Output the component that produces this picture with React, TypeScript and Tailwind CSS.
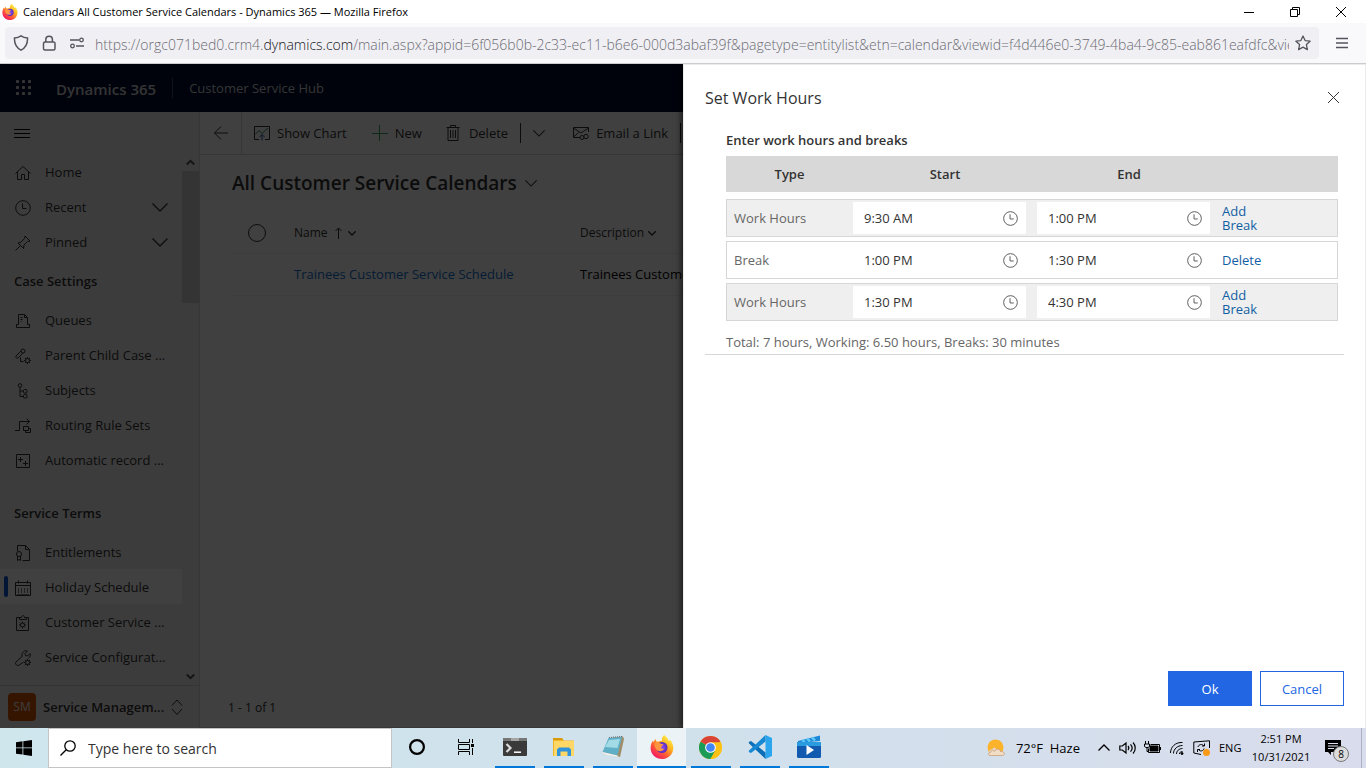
import React from "react";

type IconProps = { className?: string; children: React.ReactNode; box?: string; w?: number };

function Icon({ className = "size-4", children, box = "0 0 16 16", w = 1 }: IconProps) {
  return (
    <svg className={`shrink-0 ${className}`} viewBox={box} fill="none" stroke="currentColor" strokeWidth={w} aria-hidden="true">
      {children}
    </svg>
  );
}

const gear = (cx: number, cy: number) => (
  <>
    <circle cx={cx} cy={cy} r="2" />
    <path
      d={`M${cx} ${cy - 3.5}v1.5M${cx} ${cy + 2}v1.5M${cx - 3.5} ${cy}h1.5M${cx + 2} ${cy}h1.5M${cx - 2.5} ${cy - 2.5}l1 1M${cx + 1.5} ${cy + 1.5}l1 1M${cx + 2.5} ${cy - 2.5}l-1 1M${cx - 1.5} ${cy + 1.5}l-1 1`}
    />
  </>
);

const HomeIcon = () => <Icon><path d="M.5 8.500 8 1.500l7.500 7M2.500 7v7.500h4V9.500h3v5h4V7" /></Icon>;
const ClockIcon = ({ className = "size-4" }: { className?: string }) => (
  <Icon className={className}><circle cx="8" cy="8" r="7.300" /><path d="M7.500 3.500v5h4" /></Icon>
);
const PinIcon = () => <Icon><path d="M.5 15.500 5.500 10.500M3 8l5.500 5.500.5-3.500 3.500-3.500 2.500-.5L10 1l-.5 2.500L6 7.200 3 8Z" /></Icon>;
const QueueIcon = () => <Icon><path d="M3.500 11.500v-10h6l3 3v7M9.500 1.500v3h3M5.500 4.500h2M5.500 6.500h2M5.500 8.500h1M3.500 11.500h-2v3h13v-3h-2" /></Icon>;
const CaseIcon = () => <Icon><path d="m1 8 5-5M3 10l5-5M1 8c-1 1 1 3 2 2M5.500 9.500v4h3" /><circle cx="8" cy="3" r="2" />{gear(12.5, 12.5)}</Icon>;
const SubjectIcon = () => (
  <Icon><circle cx="5" cy="2.500" r="1.800" /><path d="M5 4.500v9h3.500M5 8h3.500" /><rect x="8.500" y="6.500" width="3.500" height="3.500" rx="1" /><rect x="8.500" y="11.500" width="3.500" height="3.500" rx="1" /></Icon>
);
const RouteIcon = () => <Icon><path d="M0 12.500h4.500v-9h10M11.500.5l3 3-3 3" /><path d="M8.500 8.500h5v4h-5zM10.500 12.500v2h5v-4h-2" /></Icon>;
const RecordIcon = () => <Icon><path d="M1.500 1.500h13v13h-13zM3 6.500h5M5.500 4v5M8 10.500h5M10.500 8v5" /></Icon>;
const EntitleIcon = () => <Icon><path d="M2.500 6V.5h8l4 4v11H7.500M10.500.5v4h4M2.500 11v4.500l1.500-1 1.500 1V11" /><circle cx="4" cy="9" r="2.500" /></Icon>;
const CalendarIcon = () => (
  <Icon><path d="M.5 2.500h15v13H.5zM.5 5.500h15M3.500.5v3M12.500.5v3" /><path strokeOpacity=".6" d="M3.500 8v5M6.500 8v5M9.500 8v5M12.500 8v5M2 14.500h12" /></Icon>
);
const ClipIcon = () => <Icon><path d="M5.500 2.500h-4v13h12v-13h-4M4.500 4.500v-2h2c0-2.500 3-2.500 3 0h2v2z" />{gear(7.5, 10)}</Icon>;
const WrenchIcon = () => (
  <Icon><path d="M8.500 12 4 15.200C2 16.300-.5 14 1 12l6-5.500C6.500 2 9.500 0 12.500 1L10 3.500l.5 2 2 .5L15 3.500c.8 2-.2 4-1.500 4.500" />{gear(12.5, 12.5)}</Icon>
);
const ChevronDown = ({ className = "size-4", w = 1 }: { className?: string; w?: number }) => (
  <Icon className={className} w={w}><path d="m.5 4.500 7.500 7.500 7.500-7.500" /></Icon>
);

function NavItem({ icon, label, expand, selected }: { icon: React.ReactNode; label: string; expand?: boolean; selected?: boolean }) {
  return (
    <a href="#" className={`flex h-[35px] shrink-0 items-center pr-3.5 ${selected ? "bg-white" : ""}`}>
      <span className={`ml-1 h-[21px] w-1 rounded-sm ${selected ? "bg-[#0b53ce]" : ""}`} />
      <span className="ml-[7px] pt-0.5">{icon}</span>
      <span className="ml-3.5 flex-1 whitespace-nowrap pt-0.5">{label}</span>
      {expand && <ChevronDown w={1.3} />}
    </a>
  );
}

function NavHeading({ children }: { children: React.ReactNode }) {
  return <h2 className="flex h-[43px] shrink-0 items-center pl-3.5 pt-0.5 font-semibold">{children}</h2>;
}

function Sidebar() {
  return (
    <nav className="flex w-[200px] shrink-0 flex-col border-r border-[#d6d6d6] bg-[#efefef] text-[13px] text-[#333]">
      <div className="flex h-[42px] shrink-0 items-center pl-3.5">
        <button aria-label="Site map" className="text-black"><Icon><path d="M0 4.500h16M0 8.500h16M0 12.500h16" /></Icon></button>
      </div>
      <div className="flex min-h-0 flex-1">
        <div className="flex min-w-0 flex-1 flex-col overflow-hidden">
          <NavItem icon={<HomeIcon />} label="Home" />
          <NavItem icon={<ClockIcon />} label="Recent" expand />
          <NavItem icon={<PinIcon />} label="Pinned" expand />
          <NavHeading>Case Settings</NavHeading>
          <NavItem icon={<QueueIcon />} label="Queues" />
          <NavItem icon={<CaseIcon />} label="Parent Child Case ..." />
          <NavItem icon={<SubjectIcon />} label="Subjects" />
          <NavItem icon={<RouteIcon />} label="Routing Rule Sets" />
          <NavItem icon={<RecordIcon />} label="Automatic record ..." />
          <div className="h-3.5 shrink-0" />
          <NavHeading>Service Terms</NavHeading>
          <NavItem icon={<EntitleIcon />} label="Entitlements" />
          <NavItem icon={<CalendarIcon />} label="Holiday Schedule" selected />
          <NavItem icon={<ClipIcon />} label="Customer Service ..." />
          <NavItem icon={<WrenchIcon />} label="Service Configurat..." />
          <NavItem icon={<HomeIcon />} label="" />
        </div>
        <div className="flex w-[17px] flex-col items-center text-[#505050]">
          <Icon className="my-1 size-[9px]" box="0 0 9 9" w={2}><path d="m.8 6.500 3.700-3.700 3.700 3.700" /></Icon>
          <div className="h-[132px] w-full bg-[#cdcdcd]" />
          <div className="flex-1" />
          <Icon className="my-1 size-[9px]" box="0 0 9 9" w={2}><path d="m.8 2.500 3.700 3.700 3.700-3.700" /></Icon>
        </div>
      </div>
      <button className="flex h-[43px] shrink-0 items-center border-t border-[#d0d0d0] pl-2 text-left">
        <span className="flex size-7 items-center justify-center rounded-sm bg-[#d45500] text-[12px] text-[#efefef]">SM</span>
        <span className="ml-[7px] w-[126px] whitespace-nowrap pt-0.5 font-semibold">Service Managem...</span>
        <Icon><path d="m3 6.500 5-5.500 5 5.500M3 10l5 5.500 5-5.500" /></Icon>
      </button>
    </nav>
  );
}

function CommandBar() {
  return (
    <div className="flex h-[43px] shrink-0 items-center overflow-hidden whitespace-nowrap border-b border-[#d6d6d6] text-[13px]">
      <button aria-label="Back" className="flex h-full w-[42px] shrink-0 items-center justify-center border-r border-[#d6d6d6]">
        <Icon className="size-4"><path d="M15 8H1.500M8 1.500 1.500 8 8 14.500" /></Icon>
      </button>
      <button className="ml-3 flex items-center gap-[7px]">
        <Icon className="size-4"><path d="M5 14.500H.5v-13h15v13H11" /><path d="m1 9.500 4-4 3 3 6-5.500" stroke="#2d8a55" /><path d="M8 15.500v-6M5.500 12 8 9.500l2.500 2.500" stroke="#2b5fa5" /></Icon>
        <span className="pt-0.5">Show Chart</span>
      </button>
      <button className="ml-[25px] flex items-center gap-[7px]">
        <Icon className="size-4 text-[#34a865]"><path d="M7.500 0v16M0 8.500h16" /></Icon>
        <span className="pt-0.5">New</span>
      </button>
      <button className="ml-[23px] flex items-center gap-2">
        <Icon className="size-4"><path d="M1.500 2.500h13M5.500 2.500v-2h5v2M3 2.500v13h10v-13M5.500 5v8M8 5v8M10.500 5v8" /></Icon>
        <span className="pt-0.5">Delete</span>
      </button>
      <span className="ml-3 h-5 w-px bg-[#333]" />
      <button aria-label="More delete options" className="ml-3"><ChevronDown className="size-3" w={1.4} /></button>
      <button className="ml-7 flex items-center gap-[7px]">
        <Icon className="size-4"><path d="M7 12.500H.5v-10h15V7M.5 3l7.500 5 7.500-5M.5 12l5-4.500" /><circle cx="9" cy="12.500" r="2" /><circle cx="13" cy="11.500" r="2.200" /></Icon>
        <span className="pt-0.5">Email a Link</span>
      </button>
      <span className="ml-3 h-5 w-px bg-[#333]" />
    </div>
  );
}

function CalendarList() {
  return (
    <main className="flex min-w-0 flex-1 flex-col border-b border-[#d6d6d6] bg-white text-[#333]">
      <CommandBar />
      <h1 className="mb-0.5 mt-3.5 flex h-7 items-center gap-2 pl-8 text-[19px] font-semibold">
        All Customer Service Calendars
        <ChevronDown className="size-3" w={1.4} />
      </h1>
      <div className="pl-8">
        <table className="w-full table-fixed text-left">
          <colgroup>
            <col className="w-[62px]" />
            <col className="w-[286px]" />
            <col />
          </colgroup>
          <thead>
            <tr className="h-[54px] border-b border-[#f0f0f0] text-[12px]">
              <th className="pl-4 pt-3.5"><button aria-label="Select all" className="block size-[18px] rounded-full border border-[#333]" /></th>
              <th className="pt-3.5 font-medium">
                <span className="flex items-center gap-1">
                  Name
                  <Icon className="size-3" box="0 0 12 12"><path d="M6.500 12V1M3.500 4l3-3 3 3" /></Icon>
                  <ChevronDown className="size-2" w={2.5} />
                </span>
              </th>
              <th className="pt-3.5 font-medium">
                <span className="flex items-center gap-1">
                  Description
                  <ChevronDown className="size-2" w={2.5} />
                </span>
              </th>
            </tr>
          </thead>
          <tbody>
            <tr className="h-[42px] border-b border-[#f0f0f0] text-[13px]">
              <td />
              <td className="whitespace-nowrap pt-0.5"><a href="#" className="text-[#1170cf]">Trainees Customer Service Schedule</a></td>
              <td className="whitespace-nowrap pt-0.5 text-black">Trainees Customer Service Schedule</td>
            </tr>
          </tbody>
        </table>
      </div>
      <footer className="mt-auto flex h-[38px] items-center pl-7 text-[12px]">1 - 1 of 1</footer>
    </main>
  );
}

function TimeField({ value, label }: { value: string; label: string }) {
  return (
    <div className="mr-[11px] flex h-8 items-center bg-white pl-[11px] pr-2">
      <input aria-label={label} defaultValue={value} className="w-full min-w-0 pt-0.5 text-[#333] outline-none" />
      <button aria-label={`Pick ${label}`}><ClockIcon className="size-[15px] text-[#555]" /></button>
    </div>
  );
}

const hours = [
  { type: "Work Hours", start: "9:30 AM", end: "1:00 PM", action: "Add Break" },
  { type: "Break", start: "1:00 PM", end: "1:30 PM", action: "Delete" },
  { type: "Work Hours", start: "1:30 PM", end: "4:30 PM", action: "Add Break" },
];

function WorkHoursPanel() {
  return (
    <section role="dialog" aria-labelledby="panel-title" className="absolute inset-y-0 right-0 flex w-1/2 flex-col border border-b-0 border-[#ebebeb] bg-white pl-[21px] pr-[21px] text-[13px] text-[#333] shadow-[-2px_0_6px_rgba(0,0,0,0.6)]">
      <header className="flex h-[65px] items-center justify-between pr-1">
        <h2 id="panel-title" className="text-[16px]">Set Work Hours</h2>
        <button aria-label="Close"><Icon className="size-[13px]" box="0 0 13 13"><path d="m1 1 11 11M12 1 1 12" /></Icon></button>
      </header>
      <div className="border-b border-[#d6d6d6] pl-[21px] pr-1.5">
        <h3 className="h-[22px] font-semibold leading-5">Enter work hours and breaks</h3>
        <table className="w-full table-fixed border-separate border-spacing-x-0 border-spacing-y-1">
          <colgroup>
            <col className="w-[127px]" />
            <col className="w-[184px]" />
            <col className="w-[184px]" />
            <col />
          </colgroup>
          <thead>
            <tr className="h-[39px]">
              {["Type", "Start", "End", ""].map((h) => (
                <th key={h} className="border-b-[3px] border-white bg-[#d8d8d8] p-0 pt-0.5 font-semibold">{h}</th>
              ))}
            </tr>
          </thead>
          <tbody>
            {hours.map((r, i) => (
              <tr key={i} className={`h-[38px] ${r.type === "Break" ? "bg-white" : "bg-[#efefef]"}`}>
                <td className="border-y border-l border-[#d6d6d6] pb-0 pl-[7px] pt-0.5 text-[#666]">{r.type}</td>
                <td className="border-y border-[#d6d6d6] px-0 py-0.5"><TimeField value={r.start} label={`${r.type} ${i + 1} start`} /></td>
                <td className="border-y border-[#d6d6d6] px-0 py-0.5"><TimeField value={r.end} label={`${r.type} ${i + 1} end`} /></td>
                <td className="border-y border-r border-[#d6d6d6] p-0 pl-px">
                  <button className="block w-12 text-left leading-3.5 text-[#115ea3]">{r.action}</button>
                </td>
              </tr>
            ))}
          </tbody>
        </table>
        <p className="h-[29px] pt-[7px] leading-5 text-[#666]">Total: 7 hours, Working: 6.50 hours, Breaks: 30 minutes</p>
      </div>
      <div className="mb-[22px] mt-auto flex justify-end gap-2">
        <button className="h-[35px] w-[84px] bg-[#2266e3] pt-0.5 text-white">Ok</button>
        <button className="h-[35px] w-[84px] border border-[#2266e3] pt-0.5 text-[#2266e3]">Cancel</button>
      </div>
    </section>
  );
}

function FirefoxLogo({ className }: { className: string }) {
  return (
    <svg viewBox="0 0 24 24" className={`shrink-0 ${className}`} aria-hidden="true">
      <defs>
        <linearGradient id="ff-body" x1="0.85" y1="0.1" x2="0.2" y2="0.95">
          <stop offset="0" stopColor="#fff04a" />
          <stop offset="0.35" stopColor="#ffb21f" />
          <stop offset="0.65" stopColor="#ff5a36" />
          <stop offset="1" stopColor="#ee1466" />
        </linearGradient>
        <radialGradient id="ff-core"><stop offset="0" stopColor="#8a4dff" /><stop offset="1" stopColor="#5b2bb8" /></radialGradient>
      </defs>
      <path fill="url(#ff-body)" d="M14 0c3 1.800 4.200 4 4.600 5.800 1-.2 1.200-1 1.200-1.400 2.400 2.800 3.700 5.600 3.500 9C23 19.500 18 24 12 24S.6 19.500.6 13c0-3 1-5.800 2.400-7.600l.4 2C4 6 5 4.500 6 4c-.2 1.200 0 2 .8 2.700C9 6.300 10.500 6 12 5.500 11.500 3.500 12.500 1.500 14 0Z" />
      <circle cx="12" cy="12.500" r="5.500" fill="url(#ff-core)" />
      <path fill="#ff9640" d="M4.500 8.500c2-1.200 4.500-.9 6 .1 1 .7 2.500.6 3 .7-.2 1.200-1.800 1.500-2.300 2.600-.2 1.700 1.300 2.400 3.300 1.600-1.500 2.500-4.500 3.500-7 2-2-1.300-3-4-3-7Z" />
    </svg>
  );
}

function BrowserChrome() {
  return (
    <header className="shrink-0">
      <div className="flex h-[23px] items-center bg-white pl-0.5 text-[11px] text-black">
        <FirefoxLogo className="size-4" />
        <span className="ml-[5px] flex-1 pt-0.5">Calendars All Customer Service Calendars - Dynamics 365 — Mozilla Firefox</span>
        <div className="flex items-center gap-9 pr-5">
          <button aria-label="Minimize"><Icon className="size-2.5" box="0 0 10 10"><path d="M0 5.500h10" /></Icon></button>
          <button aria-label="Restore"><Icon className="size-2.5" box="0 0 10 10"><path d="M.5 2.500h7v7h-7zM2.500 2.500v-2h7v7h-2" /></Icon></button>
          <button aria-label="Close window"><Icon className="size-2.5" box="0 0 10 10"><path d="m0 0 10 10M10 0 0 10" /></Icon></button>
        </div>
      </div>
      <div className="flex h-[41px] items-center border-b border-[#ccccd0] bg-[#f9f9fb] pl-[5px] pr-[17px] text-[#55545e]">
        <div className="flex h-8 min-w-0 flex-1 items-center rounded bg-[#f0f0f4] px-2">
          <Icon className="size-4" w={1.5}><path d="M8 .8c2 1.400 4 2 6.500 2.200.3 5.500-1.500 9.700-6.500 12.200C3 12.700 1.200 8.500 1.500 3 4 2.800 6 2.200 8 .8Z" /></Icon>
          <Icon className="ml-3 size-4" w={1.5}><rect x="2.500" y="7" width="11.500" height="8" rx="1.500" /><path d="M4.800 7V4.500a3.300 3.300 0 0 1 6.600 0V7" /></Icon>
          <Icon className="ml-3 size-4" w={1.3}><path d="M1 5h9M7 11h8" /><circle cx="12.500" cy="5" r="1.800" /><circle cx="3.500" cy="11" r="1.800" /></Icon>
          <div role="textbox" aria-label="Address" className="ml-2.5 min-w-0 flex-1 overflow-hidden whitespace-nowrap pt-0.5 text-[14px] font-light text-[#6c6b73]">
            https://orgc071bed0.crm4.<span className="text-[#15141a]">dynamics.com</span>/main.aspx?appid=6f056b0b-2c33-ec11-b6e6-000d3abaf39f&amp;pagetype=entitylist&amp;etn=calendar&amp;viewid=f4d446e0-3749-4ba4-9c85-eab861eafdfc&amp;view
          </div>
          <button aria-label="Bookmark" className="ml-1.5"><Icon className="size-4" w={1.3}><path strokeLinejoin="round" d="m8 1 2.100 4.600 5 .6-3.700 3.400 1 5L8 12.100l-4.400 2.500 1-5L.9 6.200l5-.6Z" /></Icon></button>
        </div>
        <button aria-label="Firefox menu" className="ml-4"><Icon className="size-3.5" box="0 0 14 14" w={1.3}><path d="M1 2.500h12M1 7h12M1 11.500h12" /></Icon></button>
      </div>
    </header>
  );
}

function AppHeader() {
  return (
    <div className="flex h-12 shrink-0 items-center bg-[#000c30] text-[#cfcfcf]">
      <button aria-label="App launcher" className="ml-4">
        <svg viewBox="0 0 16 16" className="size-4" fill="currentColor">
          {[0, 6, 12].flatMap((x) => [0, 6, 12].map((y) => <rect key={`${x}-${y}`} x={x} y={y} width="3" height="3" rx="0.8" />))}
        </svg>
      </button>
      <span className="ml-6 pt-0.5 text-[15px] font-semibold">Dynamics 365</span>
      <span className="ml-4 h-5 w-px bg-[#4a5068]" />
      <span className="ml-4 pt-0.5 text-[13px]">Customer Service Hub</span>
    </div>
  );
}

function TaskButton({ label, children, running, active }: { label: string; children: React.ReactNode; running?: boolean; active?: boolean }) {
  return (
    <button aria-label={label} className={`flex h-full w-[49px] flex-col items-center ${active ? "bg-white/60" : ""}`}>
      <span className="flex flex-1 items-center">{children}</span>
      <span className={`h-0.5 ${active ? "w-full" : "w-10"} ${running ? "bg-[#0078d7]" : ""}`} />
    </button>
  );
}

function Taskbar() {
  return (
    <footer className="flex h-10 shrink-0 items-center overflow-hidden bg-linear-to-r from-[#cfe6ed] via-[#d0e1ec] to-[#d9dcec] text-black">
      <button aria-label="Start" className="flex w-12 shrink-0 justify-center">
        <svg viewBox="0 0 16 16" className="size-4"><path d="M0 2.200 6.500 1.300v6.200H0zM7.300 1.200 16 0v7.500H7.300zM0 8.300h6.500v6.300L0 13.700zM7.300 8.300H16V16l-8.700-1.200z" /></svg>
      </button>
      <label className="flex h-full w-[344px] shrink-0 items-center border border-[#c4c4c4] bg-white pl-[11px]">
        <Icon className="size-4" w={1.3}><circle cx="10" cy="6" r="5.200" /><path d="M6.200 9.800.5 15.500" /></Icon>
        <input aria-label="Search" placeholder="Type here to search" className="ml-3 flex-1 text-[14px] outline-none placeholder:text-[#333]" />
      </label>
      <TaskButton label="Cortana"><Icon className="size-4" w={2.2}><circle cx="8" cy="8" r="6.900" /></Icon></TaskButton>
      <TaskButton label="Task view"><Icon className="size-4"><path d="M.5 0v3.500h11V0M.5 16v-3.500h11V16M.5 5.500h11v5H.5zM14.500 0v4M14.500 9v7" /><path d="M13 5h3v3h-3z" fill="currentColor" stroke="none" /></Icon></TaskButton>
      <TaskButton label="Terminal" running>
        <svg viewBox="0 0 24 18" className="h-[18px] w-6"><rect width="24" height="18" rx="1" fill="#3a3a3a" /><path d="M0 0h24v3H0z" fill="#777" /><path d="M8 0h8v3H8z" fill="#a5a5a5" /><path d="m3.500 6 4 4-4 4" fill="none" stroke="#ddd" strokeWidth="2.200" /><path d="M11 14.200h7" stroke="#fff" strokeWidth="1.500" /></svg>
      </TaskButton>
      <TaskButton label="File Explorer" running>
        <svg viewBox="0 0 22 18" className="h-[18px] w-[22px]"><path d="M0 0h9l2 2.500h10V18H0z" fill="#f0b429" /><path d="M1 3h20v15H1z" fill="#ffd767" /><path d="M0 0h9l1 2H0z" fill="#d89a0a" /><path d="M4 18v-6.500L6 9.500h10l2 2V18h-3.500v-4.500h-7V18z" fill="#2f94db" /></svg>
      </TaskButton>
      <TaskButton label="Notepad" running>
        <svg viewBox="0 0 24 24" className="size-6"><path d="m8 3 14-1.500L23 4l-4 18-16-3Z" fill="#a08c66" /><path d="M7.500 3 21 2l-4.500 18.500L1.500 17Z" fill="#5fb0c6" /><path d="m8 5 11-1-2.500 9L4 12Z" fill="#a2dbe6" /><path d="m1.500 17 15 3.500 1 1.500L4 19.500Z" fill="#f4f4f4" /><path d="M8 2.500 21 1.500" stroke="#667" strokeDasharray="1 1" /></svg>
      </TaskButton>
      <TaskButton label="Firefox" running active><FirefoxLogo className="size-6" /></TaskButton>
      <TaskButton label="Chrome" running>
        <svg viewBox="0 0 24 24" className="size-[23px]"><circle cx="12" cy="12" r="12" fill="#fbc116" /><path d="M12 12 1.600 6A12 12 0 0 1 22.400 6Z" fill="#da4437" /><path d="M1.600 6A12 12 0 0 0 12 24l5.200-9L12 12Z" fill="#1a9c58" /><path d="M12 6.500h10.600A12 12 0 0 1 12 24l5-9Z" fill="#fbc116" /><circle cx="12" cy="12" r="5.600" fill="#fff" /><circle cx="12" cy="12" r="4.500" fill="#4285f4" /></svg>
      </TaskButton>
      <TaskButton label="Visual Studio Code" running>
        <svg viewBox="0 0 24 24" className="size-6"><path d="M17.500 0 24 3v18l-6.500 3z" fill="#2aa5ee" /><path d="M.8 7 3 6l14.500 11.500V24L.8 8.200Z" fill="#0b6fb8" /><path d="M17.500 0v6.500L3 18 .8 17v-1.200Z" fill="#1688d4" /></svg>
      </TaskButton>
      <TaskButton label="Movies" running>
        <svg viewBox="0 0 24 24" className="size-6"><path d="M1 6 23 .5V6L1 8z" fill="#1c86d8" /><path d="m5 5 3 2M10 3.500l3 3M15 2.500l3 3" stroke="#5bc8f5" strokeWidth="2.500" /><rect x="0" y="7" width="24" height="16" rx="1.500" fill="#1259b0" /><path d="M0 7h24v4H0z" fill="#2b9be0" /><path d="m9.500 10 7.500 5-7.500 5z" fill="#fff" /></svg>
      </TaskButton>
      <div className="ml-auto flex h-full items-center whitespace-nowrap text-[12px]">
        <svg viewBox="0 0 20 18" className="h-[18px] w-5"><circle cx="9.500" cy="8.500" r="8" fill="#fbb32c" /><path d="M3 13.500a2.500 2.500 0 0 1 3-3c1-2.500 4-2 4.500 0l4 2.500H3Z" fill="#e6d3c0" /><path d="M4 16.500c-2-.3-2-3 .5-3.200C5 11 8 11 8.500 12.500 10 9 14 9.500 14.500 12.500c3-1 6 3.500 2 4Z" fill="#f1dcc7" stroke="#c49a6c" strokeWidth=".7" /></svg>
        <span className="ml-2.5 pt-0.5 text-[13px]">72°F&nbsp; Haze</span>
        <Icon className="ml-[18px] size-3" box="0 0 12 12" w={1.3}><path d="m.5 8.500 5.500-5.500 5.500 5.500" /></Icon>
        <Icon className="ml-[9px] h-4 w-[18px]" box="0 0 18 16" w={1.2}><path d="M.8 6v4h2.500L7 13V3L3.300 6zM9 6c1 1.200 1 2.800 0 4M11.500 4.300c2 2.200 2 5.200 0 7.400M14 2.500c3 3.200 3 7.800 0 11" /></Icon>
        <Icon className="ml-[7px] h-4 w-[17px]" box="0 0 17 16"><path d="M1.500 1v3M4.500 1v3M.5 4h5v2.500l-1.500 1H2l-1.500-1zM3 7v4.500h1.500M6.500 4.500h9v8h-11v-4M16.500 7v3" /><path d="M6 6h8v5H6z" fill="currentColor" /></Icon>
        <Icon className="ml-2 size-4"><path d="M1.500 13C1.500 7 6.500 2 13.500 2.500M4.500 13.500C4.500 9 8.500 5.500 13.500 5.500M7.500 14c0-3 2.500-5.500 6-5.500M10.500 14c0-1.500 1-2.500 3-2.500" /><circle cx="13" cy="13.500" r="1" fill="currentColor" /></Icon>
        <Icon className="ml-2 h-4 w-[18px]" box="0 0 18 16"><path d="M8 14.500.8 13V2L16.500.8V8" /><path d="M5 7c.5-2.500 4-3.500 6-1M11.500 3.500V6H9M11 8.500c-.5 2.500-4 3.500-5.500 1M4.500 12V9.500H7" /><circle cx="13.500" cy="12.500" r="3.500" fill="#fb9a16" stroke="none" /></Icon>
        <span className="ml-2 w-6 text-[11px]">ENG</span>
        <div className="ml-2 w-[60px] text-center text-[11px] leading-[18px]">2:51 PM<br />10/31/2021</div>
        <div className="relative ml-3.5 mr-3 h-6 w-6">
          <svg viewBox="0 0 24 24" className="size-6"><path d="M0 4h16v12H6v3l-3-3H0z" /><path d="M3 7.500h10M3 10h10M3 12.500h6" stroke="#dde" /></svg>
          <span className="absolute -bottom-0.5 right-0 flex size-4 items-center justify-center rounded-full border border-[#777] bg-[#dcdcdc] text-[10px]">8</span>
        </div>
        <span className="h-full w-[5px] border-l border-[#aab4c4]" />
      </div>
    </footer>
  );
}

export default function App() {
  return (
    <div className="flex h-screen flex-col overflow-hidden font-['Open_Sans','Noto_Sans',sans-serif]">
      <BrowserChrome />
      <div className="relative flex min-h-0 flex-1 flex-col overflow-hidden">
        <AppHeader />
        <div className="flex min-h-0 flex-1">
          <Sidebar />
          <CalendarList />
        </div>
        <div className="absolute inset-0 bg-black/75" />
        <WorkHoursPanel />
      </div>
      <Taskbar />
    </div>
  );
}
